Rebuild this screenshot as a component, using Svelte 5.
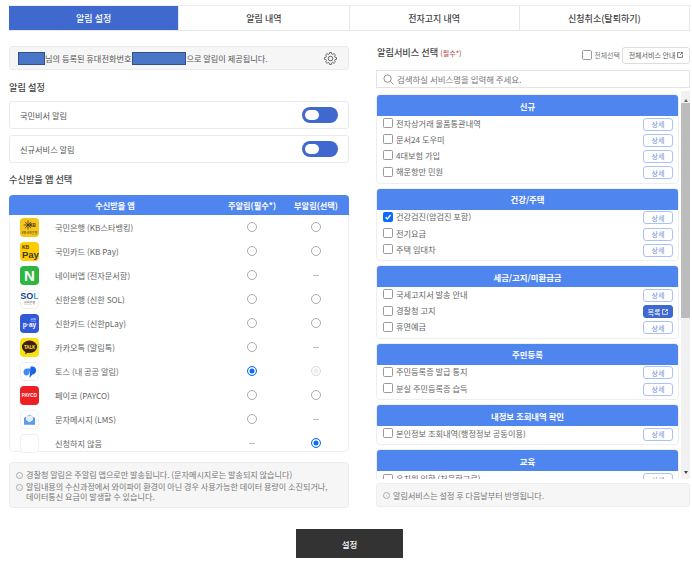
<script>
  const tabs = ["알림 설정", "알림 내역", "전자고지 내역", "신청취소(탈퇴하기)"];

  const apps = [
    { key: "kb", name: "국민은행 (KB스타뱅킹)", main: false, sub: false },
    { key: "kbpay", name: "국민카드 (KB Pay)", main: false, sub: false },
    { key: "naver", name: "네이버앱 (전자문서함)", main: false, sub: null },
    { key: "sol", name: "신한은행 (신한 SOL)", main: false, sub: false },
    { key: "play", name: "신한카드 (신한pLay)", main: false, sub: false },
    { key: "kakao", name: "카카오톡 (알림톡)", main: false, sub: null },
    { key: "toss", name: "토스 (내 공공 알림)", main: true, sub: "off" },
    { key: "payco", name: "페이코 (PAYCO)", main: false, sub: false },
    { key: "lms", name: "문자메시지 (LMS)", main: false, sub: null },
    { key: "none", name: "신청하지 않음", main: null, sub: true },
  ];

  const groups = [
    { title: "신규", items: [{ t: "전자상거래 물품통관내역" }, { t: "문서24 도우미" }, { t: "4대보험 가입" }, { t: "해운항만 민원" }] },
    { title: "건강/주택", items: [{ t: "건강검진(암검진 포함)", on: true }, { t: "전기요금" }, { t: "주택 임대차" }] },
    { title: "세금/고지/미환급금", items: [{ t: "국세고지서 발송 안내" }, { t: "경찰청 고지", list: true }, { t: "휴면예금" }] },
    { title: "주민등록", items: [{ t: "주민등록증 발급 통지" }, { t: "분실 주민등록증 습득" }] },
    { title: "내정보 조회내역 확인", items: [{ t: "본인정보 조회내역(행정정보 공동이용)" }] },
    { title: "교육", items: [{ t: "유치원 입학 (처음학교로)" }] },
  ];
</script>

<div class="page">
  <nav class="tabs">
    {#each tabs as tab, i}
      <div class="tab" class:active={i === 0}>{tab}</div>
    {/each}
  </nav>

  <div class="cols">
    <section class="left">
      <div class="phone">
        <span class="mask mask-name"></span>
        <span class="phone-text">님의 등록된 휴대전화번호 <span class="mask mask-num"></span>으로 알림이 제공됩니다.</span>
        <svg class="gear" viewBox="0 0 24 24" width="15" height="15" fill="none" stroke="#555" stroke-width="1.5">
          <circle cx="12" cy="12" r="3.6" />
          <path d="M10.3 2.5h3.4l.5 2.8 1.9.8 2.4-1.6 2.4 2.4-1.6 2.4.8 1.9 2.8.5v3.4l-2.8.5-.8 1.9 1.6 2.4-2.4 2.4-2.4-1.6-1.9.8-.5 2.8h-3.4l-.5-2.8-1.900-.8-2.400 1.600-2.400-2.400 1.600-2.400-.8-1.900-2.800-.5v-3.400l2.800-.5.8-1.900-1.600-2.400 2.400-2.400 2.400 1.600 1.900-.8z" transform="translate(12 12) scale(.88) translate(-12 -13.500)" />
        </svg>
      </div>

      <h2 class="h-alarm">알림 설정</h2>
      <div class="toggle-card"><span>국민비서 알림</span><span class="toggle"><i></i></span></div>
      <div class="toggle-card"><span>신규서비스 알림</span><span class="toggle"><i></i></span></div>

      <h2 class="h-app">수신받을 앱 선택</h2>
      <div class="table">
        <div class="thead">
          <span class="c-name">수신받을 앱</span>
          <span class="c-main">주알림(필수*)</span>
          <span class="c-sub">부알림(선택)</span>
        </div>
        {#each apps as app}
          <div class="row">
            <span class="icon {app.key}">
              {#if app.key === "kb"}
                <svg viewBox="0 0 19 19" width="19" height="19">
                  <g stroke="#3a3024" stroke-width=".8"><path d="M8 2.500v9M3.700 7h8.600M5 3.900l6 6.200M11 3.900l-6 6.200" /></g>
                  <text x="12.500" y="8.500" text-anchor="middle" font-size="4.500" font-weight="700" fill="#3a3024" font-family="Liberation Sans">KB</text>
                  <text x="9.500" y="16" text-anchor="middle" font-size="3" fill="#3a3024" font-family="Noto Sans CJK KR">KB 국민은행</text>
                </svg>
              {:else if app.key === "kbpay"}
                <span class="kb-small">KB</span><span class="kb-pay">Pay</span>
              {:else if app.key === "naver"}
                N
              {:else if app.key === "sol"}
                <span class="sol-t">SO<u>L</u></span><span class="sol-s">신한은행</span>
              {:else if app.key === "play"}
                <span class="play-s">신한</span><span>p·ay</span>
              {:else if app.key === "kakao"}
                <svg viewBox="0 0 19 19" width="19" height="19">
                  <ellipse cx="9.500" cy="8.800" rx="7.600" ry="6.200" fill="#3c1e1e" />
                  <path d="M6 13l-1 3.600 3.600-2.600z" fill="#3c1e1e" />
                  <text x="9.500" y="10.600" text-anchor="middle" font-size="4.600" font-weight="700" fill="#f7e111" font-family="Noto Sans">TALK</text>
                </svg>
              {:else if app.key === "toss"}
                <svg viewBox="0 0 17 17" width="17" height="17">
                  <path d="M2.500 9c0-2 1.600-3.500 3.600-3.500h3.600L8.300 10c-.5 1.500-1.400 2.500-2.900 2.500C3.600 12.500 2.500 10.800 2.500 9z" fill="#3d8bf5" />
                  <path d="M9.500 3.500h2c2.300 0 3.700 1.900 3.700 4 0 2.400-1.800 3.900-3.800 4.100L8.500 15l.4-5.200z" fill="#1b66e6" />
                </svg>
              {:else if app.key === "payco"}
                PAYCO
              {:else if app.key === "lms"}
                <svg viewBox="0 0 17 17" width="17" height="17">
                  <path d="M3 7l5.500-3.500L14 7v6.500H3z" fill="#4a90ea" />
                  <path d="M4.800 4.500h7.400v4.500L8.500 11.500 4.800 9z" fill="#e3edfb" />
                  <path d="M3 8.500l5.500 3.500L14 8.500v5H3z" fill="#5a9cf0" />
                </svg>
              {/if}
            </span>
            <span class="c-name app-name">{app.name}</span>
            <span class="c-main">
              {#if app.main === null}<b class="dash"></b>{:else}<span class="radio" class:on={app.main}></span>{/if}
            </span>
            <span class="c-sub">
              {#if app.sub === null}<b class="dash"></b>{:else}<span class="radio" class:on={app.sub === true} class:off={app.sub === "off"}></span>{/if}
            </span>
          </div>
        {/each}
      </div>

      <div class="note">
        <p><span class="info">i</span>경찰청 알림은 주알림 앱으로만 발송됩니다. (문자메시지로는 발송되지 않습니다)</p>
        <p><span class="info">i</span><span>알림내용의 수신과정에서 와이파이 환경이 아닌 경우 사용가능한 데이터 용량이 소진되거나,<br />데이터통신 요금이 발생할 수 있습니다.</span></p>
      </div>
    </section>

    <section class="right">
      <div class="right-head">
        <h2>알림서비스 선택 <em>(필수*)</em></h2>
        <label class="all"><span class="check"></span>전체선택</label>
        <span class="guide">전체서비스 안내
          <svg viewBox="0 0 10 10" width="6" height="6" fill="none" stroke="currentColor" stroke-width="1.300"><path d="M5 1H1v8h8V5M6 1h3v3M9 1L5 5" /></svg>
        </span>
      </div>
      <div class="search">
        <svg viewBox="0 0 12 12" width="11" height="11" fill="none" stroke="#888" stroke-width="1"><circle cx="5" cy="5" r="4" /><path d="M8 8l3.500 3.500" /></svg>
        <span>검색하실 서비스명을 입력해 주세요.</span>
      </div>

      <div class="list-wrap">
        <div class="list">
          {#each groups as g}
            <div class="group">
              <div class="g-title">{g.title}</div>
              {#each g.items as item}
                <div class="g-row">
                  <span class="check" class:on={item.on}>
                    {#if item.on}
                      <svg viewBox="0 0 10 10" width="8" height="8" fill="none" stroke="#fff" stroke-width="1.800"><path d="M2 5.200l2.200 2.300L8.200 2.500" /></svg>
                    {/if}
                  </span>
                  <span class="g-text">{item.t}</span>
                  {#if item.list}
                    <span class="btn solid">목록
                      <svg viewBox="0 0 10 10" width="6" height="6" fill="none" stroke="currentColor" stroke-width="1.300"><path d="M5 1H1v8h8V5M6 1h3v3M9 1L5 5" /></svg>
                    </span>
                  {:else}
                    <span class="btn">상세</span>
                  {/if}
                </div>
              {/each}
            </div>
          {/each}
        </div>
        <div class="scrollbar">
          <i class="arrow up"></i>
          <b class="thumb"></b>
          <i class="arrow down"></i>
        </div>
      </div>

      <div class="foot-note"><span class="info">i</span>알림서비스는 설정 후 다음날부터 반영됩니다.</div>
    </section>
  </div>

  <div class="actions"><button>설정</button></div>
</div>

<style>
  :global(body) {
    margin: 0;
    background: #fff;
    font-family: "Noto Sans CJK KR", "Noto Sans", sans-serif;
  }

  .page {
    width: 692px;
    height: 563px;
    padding: 5px 2px 0 9px;
    box-sizing: border-box;
    overflow: hidden;
    color: #555;
    font-size: 8.200px;
  }

  .tabs {
    display: flex;
    height: 26px;
    border-top: 1px solid #eee;
    border-bottom: 1px solid #e6e6e6;
    box-sizing: border-box;
  }

  .tab {
    flex: 1;
    display: flex;
    align-items: center;
    justify-content: center;
    border-right: 1px solid #e8e8e8;
    font-size: 9px;
    font-weight: 500;
    color: #444;
  }

  .tab.active {
    background: #3f69cf;
    color: #fff;
  }

  .cols {
    display: flex;
    gap: 27px;
    margin-top: 15px;
  }

  .left {
    width: 340px;
  }

  .right {
    width: 314px;
  }

  .phone {
    display: flex;
    align-items: center;
    height: 24px;
    background: #f6f6f6;
    border: 1px solid #eaeaea;
    border-radius: 3px;
    box-sizing: border-box;
    padding: 0 10px 0 8px;
  }

  .phone-text {
    flex: 1;
    display: flex;
    align-items: center;
    white-space: pre;
    color: #555;
  }

  .mask {
    display: inline-block;
    height: 13px;
    background: #4a76c8;
    border: 1px solid #2f4f8f;
    box-sizing: border-box;
  }

  .mask-name {
    width: 27px;
  }

  .mask-num {
    width: 54px;
    margin-left: -1px;
  }

  h2 {
    margin: 0;
    font-size: 9.200px;
    font-weight: 500;
    color: #444;
    line-height: 14px;
  }

  .h-alarm {
    margin: 10px 0 7px;
  }

  .h-app {
    margin: 9px 0 9px;
  }

  .toggle-card {
    display: flex;
    align-items: center;
    justify-content: space-between;
    height: 28px;
    border: 1px solid #eaeaea;
    border-radius: 3px;
    box-sizing: border-box;
    padding: 0 10px;
    margin-bottom: 6px;
    color: #555;
  }

  .toggle {
    display: flex;
    align-items: center;
    width: 36px;
    height: 16px;
    background: #3f69cf;
    border-radius: 8px;
    padding-left: 3px;
    box-sizing: border-box;
  }

  .toggle i {
    width: 14px;
    height: 10px;
    background: #fff;
    border-radius: 5px;
  }

  .table {
    height: 257px;
    border: 1px solid #eee;
    border-top: 0;
    border-radius: 5px;
    box-sizing: border-box;
  }

  .thead {
    display: flex;
    align-items: center;
    height: 20px;
    background: #4f85ee;
    border-radius: 4px 4px 0 0;
    color: #fff;
    font-weight: 700;
    margin: 0 -1px;
    padding: 0 1px;
  }

  .thead .c-name {
    flex: 1;
    text-align: center;
  }

  .row {
    display: flex;
    align-items: center;
    height: 24px;
  }

  .c-main,
  .c-sub {
    width: 64px;
    display: flex;
    justify-content: center;
  }

  .icon {
    width: 19px;
    height: 19px;
    margin-left: 10px;
    border-radius: 4px;
    flex: none;
    display: flex;
    flex-direction: column;
    align-items: center;
    justify-content: center;
    overflow: hidden;
    box-sizing: border-box;
  }

  .icon.kb {
    background: #f5c518;
  }

  .icon.kbpay {
    background: #ffcc00;
    color: #3c3528;
    font-family: "Liberation Sans", sans-serif;
    font-weight: 700;
    align-items: flex-start;
    padding-left: 2px;
  }

  .kb-small {
    font-size: 5px;
    line-height: 6px;
  }

  .kb-pay {
    font-size: 9.500px;
    line-height: 9px;
  }

  .icon.naver {
    background: #2db742;
    color: #fff;
    font: 700 15px "Liberation Sans", sans-serif;
  }

  .icon.sol,
  .icon.toss,
  .icon.lms,
  .icon.none {
    background: #fff;
    border: 1px solid #f0f0f0;
  }

  .sol-t {
    font: 700 9px/9px "Liberation Sans", sans-serif;
    color: #1a3f94;
  }

  .sol-t u {
    text-decoration: none;
    color: #3aa0e8;
  }

  .sol-s {
    font-size: 3px;
    line-height: 5px;
    color: #555;
  }

  .icon.play {
    background: #3159d8;
    color: #fff;
    font: 700 6.500px/6px "Liberation Sans", sans-serif;
  }

  .play-s {
    font: 3px/4px "Noto Sans CJK KR", sans-serif;
    align-self: flex-end;
    margin-right: 3px;
  }

  .icon.kakao {
    background: #f7e111;
  }

  .icon.payco {
    background: #ee2024;
    color: #fff;
    font: 700 4.500px "Liberation Sans", sans-serif;
  }

  .app-name {
    flex: 1;
    margin-left: 16px;
    color: #666;
  }

  .radio {
    width: 8px;
    height: 8px;
    border: 1px solid #aaa;
    border-radius: 50%;
    display: block;
    background: #fff;
  }

  .radio.on {
    border-color: #1a73e8;
    background: #0a6cff;
    box-shadow: inset 0 0 0 1.500px #fff;
  }

  .radio.off {
    border-color: #ddd;
    background: #eee;
    box-shadow: inset 0 0 0 1.500px #fff;
  }

  .dash {
    width: 6px;
    height: 1px;
    background: #bbb;
    display: block;
  }

  .note {
    margin-top: 10px;
    height: 46px;
    background: #f6f6f6;
    border: 1px solid #eee;
    border-radius: 3px;
    box-sizing: border-box;
    padding: 7px 6px 0;
    color: #777;
    font-size: 8.100px;
    line-height: 10px;
  }

  .note p {
    margin: 0 0 2px;
    display: flex;
  }

  .info {
    flex: none;
    width: 5px;
    height: 5px;
    border: 1px solid #aaa;
    border-radius: 50%;
    color: #999;
    font: 4px/5px "Liberation Sans", sans-serif;
    text-align: center;
    margin: 2px 3px 0 0;
    display: inline-block;
  }

  .right-head {
    display: flex;
    align-items: center;
    height: 18px;
  }

  .right-head h2 {
    flex: 1;
    margin: -6px 0 0 1px;
  }

  .right-head em {
    font-style: normal;
    font-size: 7px;
    color: #b05a5a;
  }

  .all {
    display: flex;
    align-items: center;
    font-size: 7px;
    color: #777;
    gap: 2px;
    margin-right: 2px;
  }

  .guide {
    width: 68px;
    height: 17px;
    display: flex;
    align-items: center;
    justify-content: center;
    gap: 2px;
    border: 1px solid #ddd;
    border-radius: 3px;
    box-sizing: border-box;
    font-size: 7px;
    color: #555;
  }

  .search {
    display: flex;
    align-items: center;
    gap: 3px;
    height: 18px;
    margin-top: 6px;
    padding-left: 6px;
    border: 1px solid #e4e4e4;
    box-sizing: border-box;
    color: #777;
    font-size: 8.450px;
  }

  .list-wrap {
    display: flex;
    gap: 2px;
    height: 388px;
    margin-top: 3px;
    overflow: hidden;
  }

  .list {
    width: 303px;
    padding-top: 3px;
    overflow: hidden;
  }

  .group {
    border: 1px solid #eee;
    border-radius: 4px;
    margin-bottom: 4px;
    padding-bottom: 2px;
    box-sizing: border-box;
  }

  .g-title {
    height: 21px;
    display: flex;
    align-items: center;
    justify-content: center;
    background: #4f85ee;
    color: #fff;
    font-size: 8.400px;
    font-weight: 700;
    border-radius: 3px 3px 0 0;
  }

  .g-row {
    height: 16.200px;
    display: flex;
    align-items: center;
    padding: 0 5px 0 6px;
  }

  .g-row .check {
    margin-top: -2px;
  }

  .check {
    width: 8px;
    height: 8px;
    border: 1px solid #999;
    border-radius: 1.500px;
    background: #fff;
    display: inline-flex;
    align-items: center;
    justify-content: center;
    flex: none;
  }

  .check.on {
    background: #0a6cff;
    border-color: #0a6cff;
  }

  .g-text {
    flex: 1;
    margin-left: 3px;
    margin-top: -3px;
    font-size: 8.200px;
    color: #666;
  }

  .btn {
    width: 30px;
    height: 13px;
    display: flex;
    align-items: center;
    justify-content: center;
    gap: 2px;
    border: 1px solid #a9c2f7;
    border-radius: 3px;
    box-sizing: border-box;
    font-size: 7px;
    color: #6f8fd8;
    background: #fff;
  }

  .btn.solid {
    background: #3f69cf;
    border-color: #3f69cf;
    color: #fff;
  }

  .scrollbar {
    width: 9px;
    background: #f1f1f1;
    display: flex;
    flex-direction: column;
    align-items: center;
  }

  .arrow {
    flex: none;
    height: 9px;
    width: 0;
    display: block;
    box-sizing: border-box;
    border-left: 2.500px solid transparent;
    border-right: 2.500px solid transparent;
  }

  .arrow.up {
    border-bottom: 3px solid #666;
    border-top: 3px solid transparent;
    margin-top: 2px;
  }

  .arrow.down {
    border-top: 3px solid #444;
    border-bottom: 3px solid transparent;
    margin-top: auto;
    margin-bottom: -1px;
  }

  .thumb {
    width: 9px;
    height: 215px;
    margin-top: 1px;
    background: #bcbcbc;
  }

  .foot-note {
    margin-top: 4px;
    height: 24px;
    background: #f6f6f6;
    border: 1px solid #eee;
    border-radius: 3px;
    display: flex;
    align-items: center;
    padding-left: 6px;
    box-sizing: border-box;
    color: #777;
    font-size: 8.100px;
  }

  .foot-note .info {
    margin-top: 0;
  }

  .actions {
    display: flex;
    justify-content: center;
    margin-top: 21px;
  }

  button {
    width: 107px;
    height: 29px;
    border: 0;
    background: #333;
    color: #fff;
    font: 500 8.500px "Noto Sans CJK KR", sans-serif;
  }
</style>
